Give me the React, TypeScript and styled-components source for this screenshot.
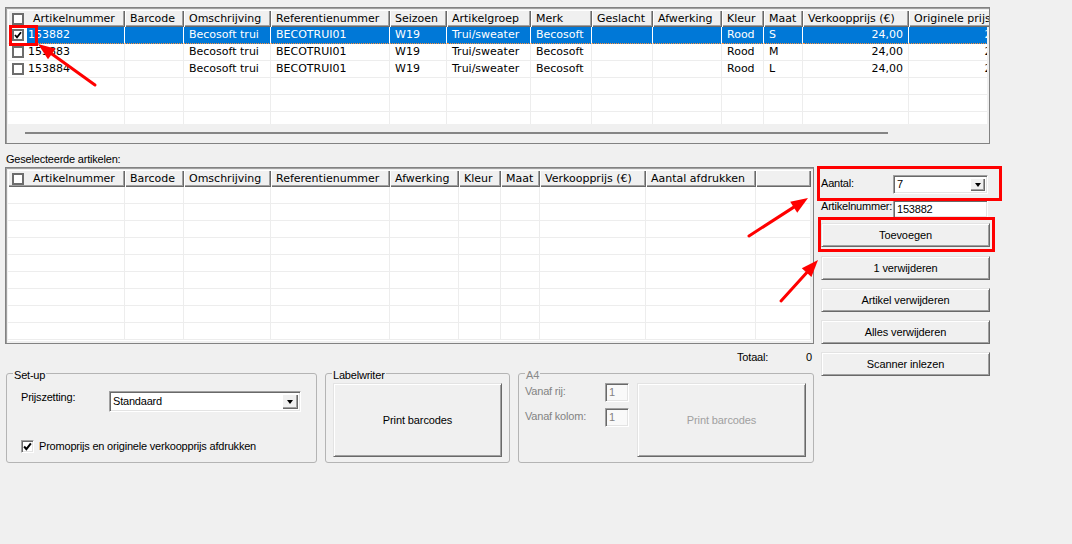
import React from 'react'
import styled, { createGlobalStyle } from 'styled-components'

const GRID_FONT = `'DejaVu Sans', Verdana, sans-serif`
const UI_FONT = `'Liberation Sans', Arial, sans-serif`
const CHECK_WIDTH = 19

const GlobalStyle = createGlobalStyle`
  html, body {
    margin: 0;
    padding: 0;
    background: #f0f0f0;
  }
  body {
    font-family: ${UI_FONT};
    font-size: 11px;
    letter-spacing: -0.2px;
    color: #000;
  }
`

interface Column {
  title: string
  width: number
  align?: 'left' | 'right'
}

const topColumns: Column[] = [
  { title: 'Artikelnummer', width: 117 },
  { title: 'Barcode', width: 59 },
  { title: 'Omschrijving', width: 87 },
  { title: 'Referentienummer', width: 119 },
  { title: 'Seizoen', width: 57 },
  { title: 'Artikelgroep', width: 84 },
  { title: 'Merk', width: 61 },
  { title: 'Geslacht', width: 61 },
  { title: 'Afwerking', width: 69 },
  { title: 'Kleur', width: 42 },
  { title: 'Maat', width: 39 },
  { title: 'Verkoopprijs (€)', width: 106, align: 'right' },
  { title: 'Originele prijs (€)', width: 113, align: 'right' },
]

const selectedColumns: Column[] = [
  { title: 'Artikelnummer', width: 117 },
  { title: 'Barcode', width: 59 },
  { title: 'Omschrijving', width: 87 },
  { title: 'Referentienummer', width: 119 },
  { title: 'Afwerking', width: 69 },
  { title: 'Kleur', width: 42 },
  { title: 'Maat', width: 39 },
  { title: 'Verkoopprijs (€)', width: 106, align: 'right' },
  { title: 'Aantal afdrukken', width: 110, align: 'right' },
]

const articles = [
  ['153882', '', 'Becosoft trui', 'BECOTRUI01', 'W19', 'Trui/sweater', 'Becosoft', '', '', 'Rood', 'S', '24,00', '24,00'],
  ['153883', '', 'Becosoft trui', 'BECOTRUI01', 'W19', 'Trui/sweater', 'Becosoft', '', '', 'Rood', 'M', '24,00', '24,00'],
  ['153884', '', 'Becosoft trui', 'BECOTRUI01', 'W19', 'Trui/sweater', 'Becosoft', '', '', 'Rood', 'L', '24,00', '24,00'],
]

const Window = styled.div`
  position: relative;
  width: 1072px;
  height: 544px;
  overflow: hidden;
  box-sizing: border-box;
  padding: 7px 0 0 5px;
  background: #f0f0f0;
`

/* ---------- grid ---------- */

const GridFrame = styled.div<{ $width: number; $height: number }>`
  width: ${p => p.$width}px;
  height: ${p => p.$height}px;
  box-sizing: border-box;
  border: 1px solid #828282;
  box-shadow: inset 1px 1px 0 #a0a0a0;
  padding: 2px;
  background: #f0f0f0;
  display: flex;
  flex-direction: column;
  overflow: hidden;
  font-family: ${GRID_FONT};
  font-size: 11px;
  letter-spacing: normal;
`

const GridHeader = styled.div`
  display: flex;
  height: 17px;
  flex-shrink: 0;
`

const HeaderCell = styled.div<{ $width?: number }>`
  ${p => (p.$width ? `width: ${p.$width}px; flex-shrink: 0;` : 'flex: 1;')}
  box-sizing: border-box;
  display: flex;
  align-items: center;
  padding: 0 4px 0 5px;
  white-space: nowrap;
  overflow: hidden;
  background: #f0f0f0;
  box-shadow: inset 1px 1px 0 #fff, inset -1px -1px 0 #696969, inset -2px -2px 0 #a0a0a0;
`

const HeaderFirst = styled(HeaderCell)`
  padding-left: 4px;
`

const GridBody = styled.div<{ $height: number }>`
  height: ${p => p.$height}px;
  flex-shrink: 0;
  background: #fff;
  overflow: hidden;
`

const GridRow = styled.div`
  display: flex;
  height: 17px;
`

const CheckCell = styled.div`
  width: ${CHECK_WIDTH}px;
  flex-shrink: 0;
  box-sizing: border-box;
  display: flex;
  align-items: center;
  padding-left: 4px;
  background: #fff;
  border-bottom: 1px solid #ededed;
`

const Cell = styled.div<{ $width?: number; $align?: string; $selected?: boolean; $first?: boolean }>`
  ${p => (p.$width ? `width: ${p.$width}px; flex-shrink: 0;` : 'flex: 1;')}
  box-sizing: border-box;
  padding: 0 ${p => (p.$align === 'right' ? 5 : 0)}px 0 ${p => (p.$first ? 1 : 5)}px;
  text-align: ${p => p.$align ?? 'left'};
  line-height: 16px;
  white-space: nowrap;
  overflow: hidden;
  background: ${p => (p.$selected ? '#0078d7' : '#fff')};
  color: ${p => (p.$selected ? '#fff' : '#000')};
  border-right: 1px solid ${p => (p.$selected ? '#fff' : '#ededed')};
  border-bottom: 1px ${p => (p.$selected ? 'dotted #ff8f3a' : 'solid #ededed')};
`

const GridCheck = styled.span`
  width: 12px;
  height: 12px;
  box-sizing: border-box;
  border: 2px solid #6d6d6d;
  background: #fff;
  display: inline-flex;
  align-items: center;
  justify-content: center;
  flex-shrink: 0;
`

const HeaderCheck = styled(GridCheck)`
  margin-right: 9px;
`

const ScrollTrack = styled.div`
  height: 17px;
  flex-shrink: 0;
  box-sizing: border-box;
  padding: 8px 0 0 17px;
  background: #f0f0f0;
`

const ScrollThumb = styled.div<{ $width: number }>`
  width: ${p => p.$width}px;
  height: 2px;
  background: #858585;
`

const CheckMark: React.FC<{ size?: number }> = ({ size = 8 }) => (
  <svg width={size} height={size} viewBox="0 0 8 8">
    <path d="M1 4 L3 6.3 L7 1.2" fill="none" stroke="#000" strokeWidth={1.8} />
  </svg>
)

interface DataGridProps {
  columns: Column[]
  rows: string[][]
  rowCount: number
  width: number
  height: number
  bodyHeight: number
  checked?: number[]
  selected?: number
  scrollThumb?: number
  filler?: boolean
}

const DataGrid: React.FC<DataGridProps> = ({
  columns, rows, rowCount, width, height, bodyHeight, checked = [], selected, scrollThumb, filler,
}) => (
  <GridFrame $width={width} $height={height}>
    <GridHeader>
      {columns.map((c, i) =>
        i === 0 ? (
          <HeaderFirst key={c.title} $width={c.width}>
            <HeaderCheck />
            {c.title}
          </HeaderFirst>
        ) : (
          <HeaderCell key={c.title} $width={c.width}>{c.title}</HeaderCell>
        )
      )}
      {filler && <HeaderCell />}
    </GridHeader>
    <GridBody $height={bodyHeight}>
      {Array.from({ length: rowCount }).map((_, r) => {
        const data = rows[r]
        const isSel = r === selected
        return (
          <GridRow key={r}>
            <CheckCell>
              {data && <GridCheck>{checked.includes(r) && <CheckMark />}</GridCheck>}
            </CheckCell>
            {columns.map((c, i) => (
              <Cell
                key={c.title}
                $width={i === 0 ? c.width - CHECK_WIDTH : c.width}
                $align={c.align}
                $selected={isSel}
                $first={i === 0}
              >
                {data ? data[i] : ''}
              </Cell>
            ))}
            {filler && <Cell />}
          </GridRow>
        )
      })}
    </GridBody>
    {scrollThumb && (
      <ScrollTrack>
        <ScrollThumb $width={scrollThumb} />
      </ScrollTrack>
    )}
  </GridFrame>
)

/* ---------- form parts ---------- */

const SectionLabel = styled.div`
  margin: 9px 0 1px 1px;
  line-height: 13px;
`

const Workspace = styled.div`
  display: flex;
  align-items: flex-start;
  gap: 7px;
`

const LeftColumn = styled.div`
  width: 809px;
  display: flex;
  flex-direction: column;
`

const RightColumn = styled.div`
  width: 169px;
  display: flex;
  flex-direction: column;
  padding-top: 8px;
`

const TotalRow = styled.div`
  display: flex;
  justify-content: flex-end;
  gap: 38px;
  margin-top: 7px;
  padding-right: 2px;
  line-height: 13px;
`

const GroupsRow = styled.div`
  display: flex;
  gap: 8px;
  margin-top: 2px;
  padding-left: 1px;
`

const GroupBox = styled.fieldset<{ $width: number }>`
  width: ${p => p.$width}px;
  height: 97px;
  box-sizing: border-box;
  margin: 0;
  padding: 0 6px;
  min-inline-size: 0;
  border: 1px solid #b4b4b4;
  border-radius: 3px;
`

const GroupLegend = styled.legend<{ $disabled?: boolean }>`
  padding: 4px 1px 0;
  line-height: 11px;
  font-size: 11px;
  color: ${p => (p.$disabled ? '#8a8a8a' : '#000')};
`

const SetupBody = styled.div`
  display: flex;
  flex-direction: column;
  padding: 10px 0 0 8px;
`

const FieldRow = styled.div<{ $height: number }>`
  display: flex;
  align-items: flex-start;
  height: ${p => p.$height}px;
`

const SpacedRow = styled(FieldRow)`
  margin-top: 6px;
`

const FieldLabel = styled.span<{ $width: number; $offset?: number; $disabled?: boolean }>`
  width: ${p => p.$width}px;
  flex-shrink: 0;
  padding-top: ${p => p.$offset ?? 0}px;
  line-height: 13px;
  white-space: nowrap;
  color: ${p => (p.$disabled ? '#838383' : '#000')};
`

const PromoRow = styled.label`
  display: flex;
  align-items: flex-start;
  gap: 5px;
  margin-top: 28px;
  line-height: 13px;
`

const Sunken = styled.div<{ $width: number; $height: number; $bg?: string }>`
  width: ${p => p.$width}px;
  height: ${p => p.$height}px;
  flex-shrink: 0;
  box-sizing: border-box;
  display: flex;
  padding: 2px;
  background: ${p => p.$bg ?? '#fff'};
  border: 1px solid;
  border-color: #a0a0a0 #fff #fff #a0a0a0;
  box-shadow: inset 1px 1px 0 #696969, inset -1px -1px 0 #e3e3e3;
`

const FieldValue = styled.span<{ $lineHeight: number; $disabled?: boolean }>`
  flex: 1;
  padding-left: 1px;
  line-height: ${p => p.$lineHeight}px;
  white-space: nowrap;
  color: ${p => (p.$disabled ? '#838383' : '#000')};
`

const DropButton = styled.span<{ $width: number }>`
  width: ${p => p.$width}px;
  flex-shrink: 0;
  display: flex;
  align-items: center;
  justify-content: center;
  background: #f0f0f0;
  box-shadow: inset 1px 1px 0 #fff, inset -1px -1px 0 #696969, inset -2px -2px 0 #a0a0a0;
`

const DropArrow = styled.span`
  width: 0;
  height: 0;
  border-left: 3.5px solid transparent;
  border-right: 3.5px solid transparent;
  border-top: 4px solid #000;
  margin-top: 1px;
`

const ClassicCheck = styled.span`
  width: 13px;
  height: 13px;
  flex-shrink: 0;
  box-sizing: border-box;
  display: flex;
  align-items: center;
  justify-content: center;
  background: #fff;
  border: 1px solid;
  border-color: #a0a0a0 #fff #fff #a0a0a0;
  box-shadow: inset 1px 1px 0 #696969, inset -1px -1px 0 #e3e3e3;
`

const PushButton = styled.button<{ $height?: number }>`
  width: 169px;
  height: ${p => p.$height ?? 24}px;
  flex-shrink: 0;
  box-sizing: border-box;
  margin: 0;
  padding: 0;
  font-family: ${UI_FONT};
  font-size: 11px;
  letter-spacing: -0.1px;
  color: #000;
  background: #f0f0f0;
  border: 1px solid;
  border-color: #e3e3e3 #696969 #696969 #e3e3e3;
  box-shadow: inset 1px 1px 0 #fff, inset -1px -1px 0 #a0a0a0;
  &:disabled {
    color: #a0a0a0;
  }
`

const ButtonStack = styled.div`
  display: flex;
  flex-direction: column;
  gap: 8px;
  margin-top: 5px;
`

const PrimaryButton = styled(PushButton)`
  margin-bottom: 1px;
`

const LabelwriterBody = styled.div`
  padding: 2px 0 0 1px;
`

const A4Body = styled.div`
  display: flex;
  gap: 8px;
  padding-top: 2px;
`

const A4Fields = styled.div`
  display: flex;
  flex-direction: column;
  gap: 6px;
`

/* ---------- annotations ---------- */

const Highlight = styled.div<{ $x: number; $y: number; $w: number; $h: number }>`
  position: absolute;
  left: ${p => p.$x}px;
  top: ${p => p.$y}px;
  width: ${p => p.$w}px;
  height: ${p => p.$h}px;
  box-sizing: border-box;
  border: 3px solid #ff0000;
  pointer-events: none;
`

const ArrowLayer = styled.svg`
  position: absolute;
  left: 0;
  top: 0;
  pointer-events: none;
`

const Arrow: React.FC<{ from: [number, number]; to: [number, number] }> = ({ from, to }) => {
  const [x1, y1] = from
  const [x2, y2] = to
  const len = Math.hypot(x2 - x1, y2 - y1)
  const ux = (x2 - x1) / len
  const uy = (y2 - y1) / len
  const head = 17
  const half = 6.5
  const bx = x2 - ux * head
  const by = y2 - uy * head
  const points = `${x2},${y2} ${bx - uy * half},${by + ux * half} ${bx + uy * half},${by - ux * half}`
  return (
    <g>
      <line x1={x1} y1={y1} x2={bx + ux * 2} y2={by + uy * 2} stroke="#ff0000" strokeWidth={3} strokeLinecap="round" />
      <polygon points={points} fill="#ff0000" />
    </g>
  )
}

const App: React.FC = () => (
  <>
    <GlobalStyle />
    <Window>
      <DataGrid
        columns={topColumns}
        rows={articles}
        rowCount={6}
        width={985}
        height={137}
        bodyHeight={97}
        checked={[0]}
        selected={0}
        scrollThumb={863}
      />
      <SectionLabel>Geselecteerde artikelen:</SectionLabel>
      <Workspace>
        <LeftColumn>
          <DataGrid columns={selectedColumns} rows={[]} rowCount={9} width={809} height={177} bodyHeight={154} filler />
          <TotalRow>
            <span>Totaal:</span>
            <span>0</span>
          </TotalRow>
          <GroupsRow>
            <GroupBox $width={311}>
              <GroupLegend>Set-up</GroupLegend>
              <SetupBody>
                <FieldRow $height={21}>
                  <FieldLabel $width={88}>Prijszetting:</FieldLabel>
                  <Sunken $width={192} $height={21}>
                    <FieldValue $lineHeight={15}>Standaard</FieldValue>
                    <DropButton $width={16}><DropArrow /></DropButton>
                  </Sunken>
                </FieldRow>
                <PromoRow>
                  <ClassicCheck><CheckMark size={9} /></ClassicCheck>
                  <span>Promoprijs en originele verkoopprijs afdrukken</span>
                </PromoRow>
              </SetupBody>
            </GroupBox>
            <GroupBox $width={185}>
              <GroupLegend>Labelwriter</GroupLegend>
              <LabelwriterBody>
                <PushButton $height={74}>Print barcodes</PushButton>
              </LabelwriterBody>
            </GroupBox>
            <GroupBox $width={296}>
              <GroupLegend $disabled>A4</GroupLegend>
              <A4Body>
                <A4Fields>
                  <FieldRow $height={19}>
                    <FieldLabel $width={80} $offset={2} $disabled>Vanaf rij:</FieldLabel>
                    <Sunken $width={24} $height={19} $bg="#f9f9f9">
                      <FieldValue $lineHeight={13} $disabled>1</FieldValue>
                    </Sunken>
                  </FieldRow>
                  <FieldRow $height={19}>
                    <FieldLabel $width={80} $offset={2} $disabled>Vanaf kolom:</FieldLabel>
                    <Sunken $width={24} $height={19} $bg="#f9f9f9">
                      <FieldValue $lineHeight={13} $disabled>1</FieldValue>
                    </Sunken>
                  </FieldRow>
                </A4Fields>
                <PushButton $height={74} disabled>Print barcodes</PushButton>
              </A4Body>
            </GroupBox>
          </GroupsRow>
        </LeftColumn>
        <RightColumn>
          <FieldRow $height={19}>
            <FieldLabel $width={72} $offset={2}>Aantal:</FieldLabel>
            <Sunken $width={95} $height={19}>
              <FieldValue $lineHeight={13}>7</FieldValue>
              <DropButton $width={15}><DropArrow /></DropButton>
            </Sunken>
          </FieldRow>
          <SpacedRow $height={18}>
            <FieldLabel $width={72}>Artikelnummer:</FieldLabel>
            <Sunken $width={95} $height={18}>
              <FieldValue $lineHeight={13}>153882</FieldValue>
            </Sunken>
          </SpacedRow>
          <ButtonStack>
            <PrimaryButton>Toevoegen</PrimaryButton>
            <PushButton>1 verwijderen</PushButton>
            <PushButton>Artikel verwijderen</PushButton>
            <PushButton>Alles verwijderen</PushButton>
            <PushButton>Scanner inlezen</PushButton>
          </ButtonStack>
        </RightColumn>
      </Workspace>

      <Highlight $x={9} $y={25} $w={29} $h={21} />
      <Highlight $x={817} $y={166} $w={185} $h={35} />
      <Highlight $x={818} $y={217} $w={177} $h={35} />
      <ArrowLayer width={1072} height={544}>
        <Arrow from={[95, 85]} to={[38, 44]} />
        <Arrow from={[749, 236]} to={[808, 198]} />
        <Arrow from={[781, 301]} to={[818, 260]} />
      </ArrowLayer>
    </Window>
  </>
)

export default App
